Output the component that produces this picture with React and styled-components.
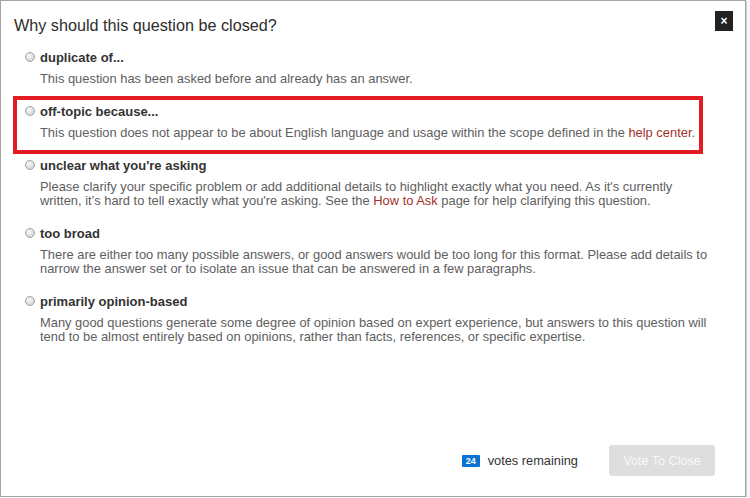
import React from 'react'
import styled, { createGlobalStyle } from 'styled-components'

const GlobalStyle = createGlobalStyle`
  html, body {
    margin: 0;
    padding: 0;
    background: #f7f7f7;
  }
  body {
    font-family: "Liberation Sans", Arial, sans-serif;
  }
`

const Dialog = styled.div`
  position: relative;
  box-sizing: border-box;
  width: 746px;
  height: 497px;
  background: #fff;
  border: 1px solid #a4a4a4;
  box-shadow: 1px 1px 0 #d0d0d0;
  display: flex;
  flex-direction: column;
`

const Header = styled.div`
  display: flex;
  justify-content: space-between;
  align-items: flex-start;
  padding: 10px 12px 0 13px;
`

const Title = styled.h2`
  margin: 4px 0 0 0;
  font-size: 16.2px;
  line-height: 20px;
  font-weight: normal;
  color: #2d2d2d;
`

const CloseButton = styled.div`
  width: 18px;
  height: 20px;
  background: #222;
  color: #fff;
  display: flex;
  align-items: center;
  justify-content: center;
  font-size: 12px;
  font-weight: bold;
  line-height: 1;
  cursor: pointer;
`

const List = styled.ul`
  list-style: none;
  margin: 14px 0 0 0;
  padding: 0 35px 0 24px;
  display: flex;
  flex-direction: column;
  gap: 17.5px;
`

const Item = styled.li`
  position: relative;

  ${(p) =>
    p.$marked &&
    `
    &::after {
      content: '';
      position: absolute;
      top: -7px;
      bottom: -14px;
      left: -12px;
      right: 7px;
      border: 4px solid #e31b23;
      pointer-events: none;
    }
  `}
`

const LabelRow = styled.label`
  display: flex;
  align-items: center;
  gap: 5px;
  height: 16px;
  font-size: 13px;
  font-weight: bold;
  color: #333;
`

const Radio = styled.span`
  box-sizing: border-box;
  width: 10px;
  height: 10px;
  border-radius: 50%;
  border: 1px solid #a2a2a2;
  background: radial-gradient(circle at 40% 35%, #fafafa 0%, #dcdcdc 60%, #c8c8c8 100%);
  flex-shrink: 0;
`

const Description = styled.p`
  margin: 6.5px 0 0 15px;
  font-size: 12.9px;
  line-height: 14px;
  color: #5e5e5e;
`

const Link = styled.a`
  color: #a3302c;
  text-decoration: none;
`

const Footer = styled.div`
  margin-top: auto;
  display: flex;
  justify-content: flex-end;
  align-items: center;
  padding: 0 30px 20px 0;
`

const Badge = styled.span`
  display: inline-flex;
  align-items: center;
  justify-content: center;
  width: 18px;
  height: 12px;
  background: #0a72d1;
  color: #fff;
  font-size: 9px;
  font-weight: bold;
  border-radius: 1px;
`

const VotesText = styled.span`
  margin-left: 8px;
  font-size: 12.8px;
  color: #333;
`

const VoteButton = styled.button`
  margin-left: 31px;
  width: 106px;
  height: 31px;
  border: none;
  border-radius: 3px;
  background: #dedede;
  color: #f8f8f8;
  font-family: "Liberation Sans", Arial, sans-serif;
  font-size: 12.6px;
  padding: 0;
`

const reasons = [
  {
    label: 'duplicate of...',
    text: 'This question has been asked before and already has an answer.',
  },
  {
    label: 'off-topic because...',
    marked: true,
    text: (
      <>
        This question does not appear to be about English language and usage within the scope
        defined in the <Link href="#">help center</Link>.
      </>
    ),
  },
  {
    label: "unclear what you're asking",
    text: (
      <>
        Please clarify your specific problem or add additional details to highlight exactly what
        you need. As it's currently written, it’s hard to tell exactly what you're asking. See the{' '}
        <Link href="#">How to Ask</Link> page for help clarifying this question.
      </>
    ),
  },
  {
    label: 'too broad',
    text: 'There are either too many possible answers, or good answers would be too long for this format. Please add details to narrow the answer set or to isolate an issue that can be answered in a few paragraphs.',
  },
  {
    label: 'primarily opinion-based',
    text: 'Many good questions generate some degree of opinion based on expert experience, but answers to this question will tend to be almost entirely based on opinions, rather than facts, references, or specific expertise.',
  },
]

const App = () => {
  return (
    <>
      <GlobalStyle />
      <Dialog>
        <Header>
          <Title>Why should this question be closed?</Title>
          <CloseButton>×</CloseButton>
        </Header>
        <List>
          {reasons.map((r) => (
            <Item key={r.label} $marked={r.marked}>
              <LabelRow>
                <Radio />
                {r.label}
              </LabelRow>
              <Description>{r.text}</Description>
            </Item>
          ))}
        </List>
        <Footer>
          <Badge>24</Badge>
          <VotesText>votes remaining</VotesText>
          <VoteButton disabled>Vote To Close</VoteButton>
        </Footer>
      </Dialog>
    </>
  )
}

export default App
